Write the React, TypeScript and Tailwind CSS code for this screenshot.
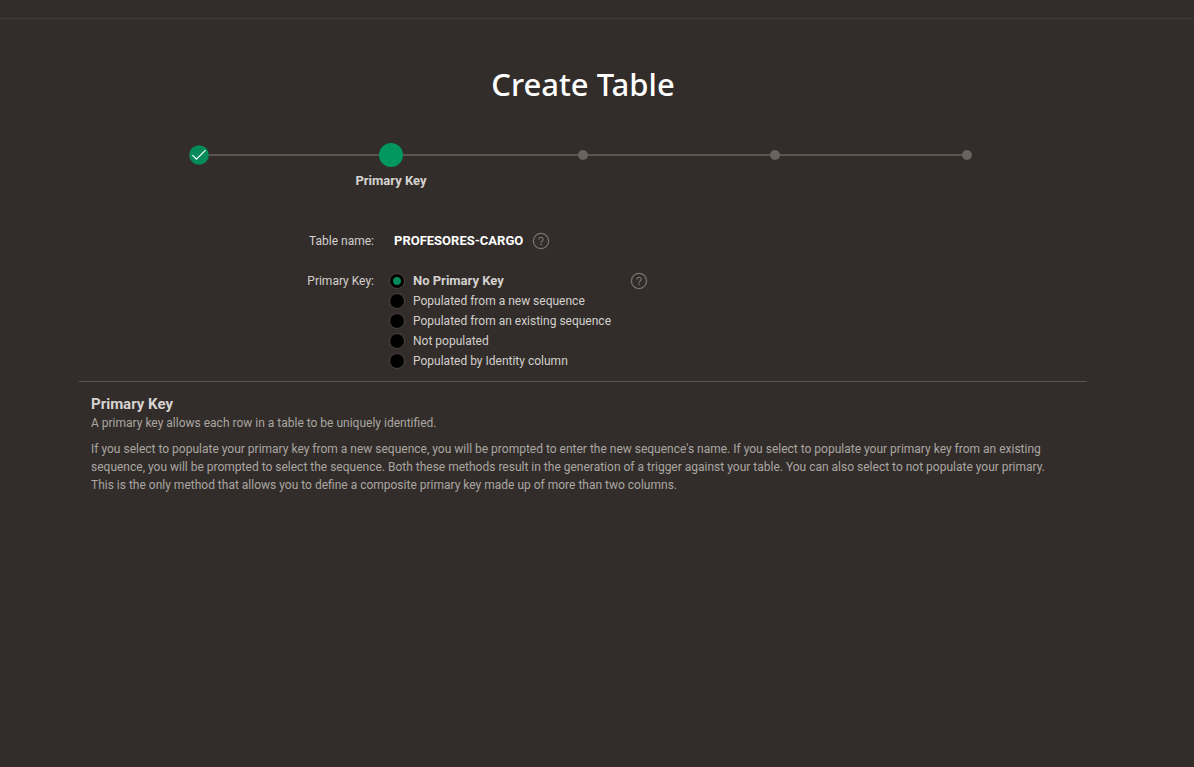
import { useState } from "react";

const steps = ["Columns", "Primary Key", "Foreign Key", "Constraints", "Confirm"];
const currentStep = 1;

const keyOptions = [
  "No Primary Key",
  "Populated from a new sequence",
  "Populated from an existing sequence",
  "Not populated",
  "Populated by Identity column",
];

function HelpButton({ label }: { label: string }) {
  return (
    <button type="button" aria-label={label} className="size-5 shrink-0 text-[#7b7571]">
      <svg viewBox="0 0 20 20" className="size-5" fill="none" stroke="currentColor">
        <circle cx="10" cy="10" r="7.6" strokeWidth="1.2" />
        <path d="M7.9 8.4a2.1 2.1 0 1 1 3.3 1.7c-.8.5-1.2.8-1.2 1.6" strokeWidth="1.2" />
        <circle cx="10" cy="13.4" r=".8" fill="currentColor" stroke="none" />
      </svg>
    </button>
  );
}

function StepMarker({ index }: { index: number }) {
  if (index < currentStep) {
    return (
      <svg viewBox="0 0 20 20" className="relative size-5">
        <circle cx="10" cy="10" r="9.8" fill="#048a5b" />
        <path d="M3.4 10.1l4.1 4.1 9.1-9.1" fill="none" stroke="#fff" strokeWidth="1.2" />
      </svg>
    );
  }
  if (index === currentStep) {
    return <span className="relative size-6 rounded-full bg-[#02975f]" />;
  }
  return <span className="relative size-[10px] rounded-full bg-[#69635e]" />;
}

function Progress() {
  return (
    <ol className="mx-auto grid w-full max-w-[960px] grid-cols-5">
      {steps.map((step, i) => (
        <li key={step} className="flex flex-col items-center">
          <div className="relative flex h-6 w-full items-center justify-center">
            {i > 0 && <span className="absolute left-0 h-[2px] w-1/2 bg-[#5b544e]" />}
            {i < steps.length - 1 && <span className="absolute right-0 h-[2px] w-1/2 bg-[#5b544e]" />}
            <StepMarker index={i} />
          </div>
          {i === currentStep && (
            <span className="mt-1 text-[13px] leading-5 font-bold text-[#d6d3d1]">{step}</span>
          )}
        </li>
      ))}
    </ol>
  );
}

export default function App() {
  const [selected, setSelected] = useState(keyOptions[0]);

  return (
    <div className="min-h-screen bg-[#322d2a] font-['Roboto',sans-serif] text-[12px] leading-5 text-[#d3d0cd]">
      <header className="h-[19px] border-b border-[#403b38]" />
      <main className="pr-7">
        <div className="mx-auto w-full max-w-[1008px]">
          <h1 className="pt-11 text-center font-['Noto_Sans',sans-serif] text-[31px] leading-[42px] font-medium text-white">
            Create Table
          </h1>
          <div className="pt-[38px]">
            <Progress />
          </div>

          <form className="mt-10 grid grid-cols-[295px_1fr] gap-y-5 border-b border-[#5b5551] pb-[10px]">
            <span className="text-right">Table name:</span>
            <div className="flex gap-2 pl-5">
              <output aria-label="Table name" className="text-[13px] font-bold text-white">
                PROFESORES-CARGO
              </output>
              <HelpButton label="Help for table name" />
            </div>

            <span id="primary-key-label" className="text-right">
              Primary Key:
            </span>
            <div className="flex pl-[15px]">
              <div role="radiogroup" aria-labelledby="primary-key-label" className="w-60">
                {keyOptions.map((option) => (
                  <label key={option} className="flex h-5 items-center gap-2">
                    <input
                      type="radio"
                      name="primary-key"
                      checked={selected === option}
                      onChange={() => setSelected(option)}
                      className="peer size-4 appearance-none rounded-full border border-[#4a4542] bg-black checked:bg-[radial-gradient(circle,#048a5b_3.5px,#000_4.5px)]"
                    />
                    <span className="peer-checked:text-[13px] peer-checked:font-bold">{option}</span>
                  </label>
                ))}
              </div>
              <HelpButton label="Help for primary key" />
            </div>
          </form>

          <section className="pt-3 pr-6 pl-3 text-[#aaa6a2]">
            <h2 className="text-[15px] leading-5 font-bold text-[#d6d3d1]">Primary Key</h2>
            <p className="leading-[18px]">A primary key allows each row in a table to be uniquely identified.</p>
            <p className="mt-2 leading-[18px]">
              If you select to populate your primary key from a new sequence, you will be prompted to enter the new
              sequence's name. If you select to populate your primary key from an existing sequence, you will be
              prompted to select the sequence. Both these methods result in the generation of a trigger against your
              table. You can also select to not populate your primary. This is the only method that allows you to
              define a composite primary key made up of more than two columns.
            </p>
          </section>
        </div>
      </main>
    </div>
  );
}
